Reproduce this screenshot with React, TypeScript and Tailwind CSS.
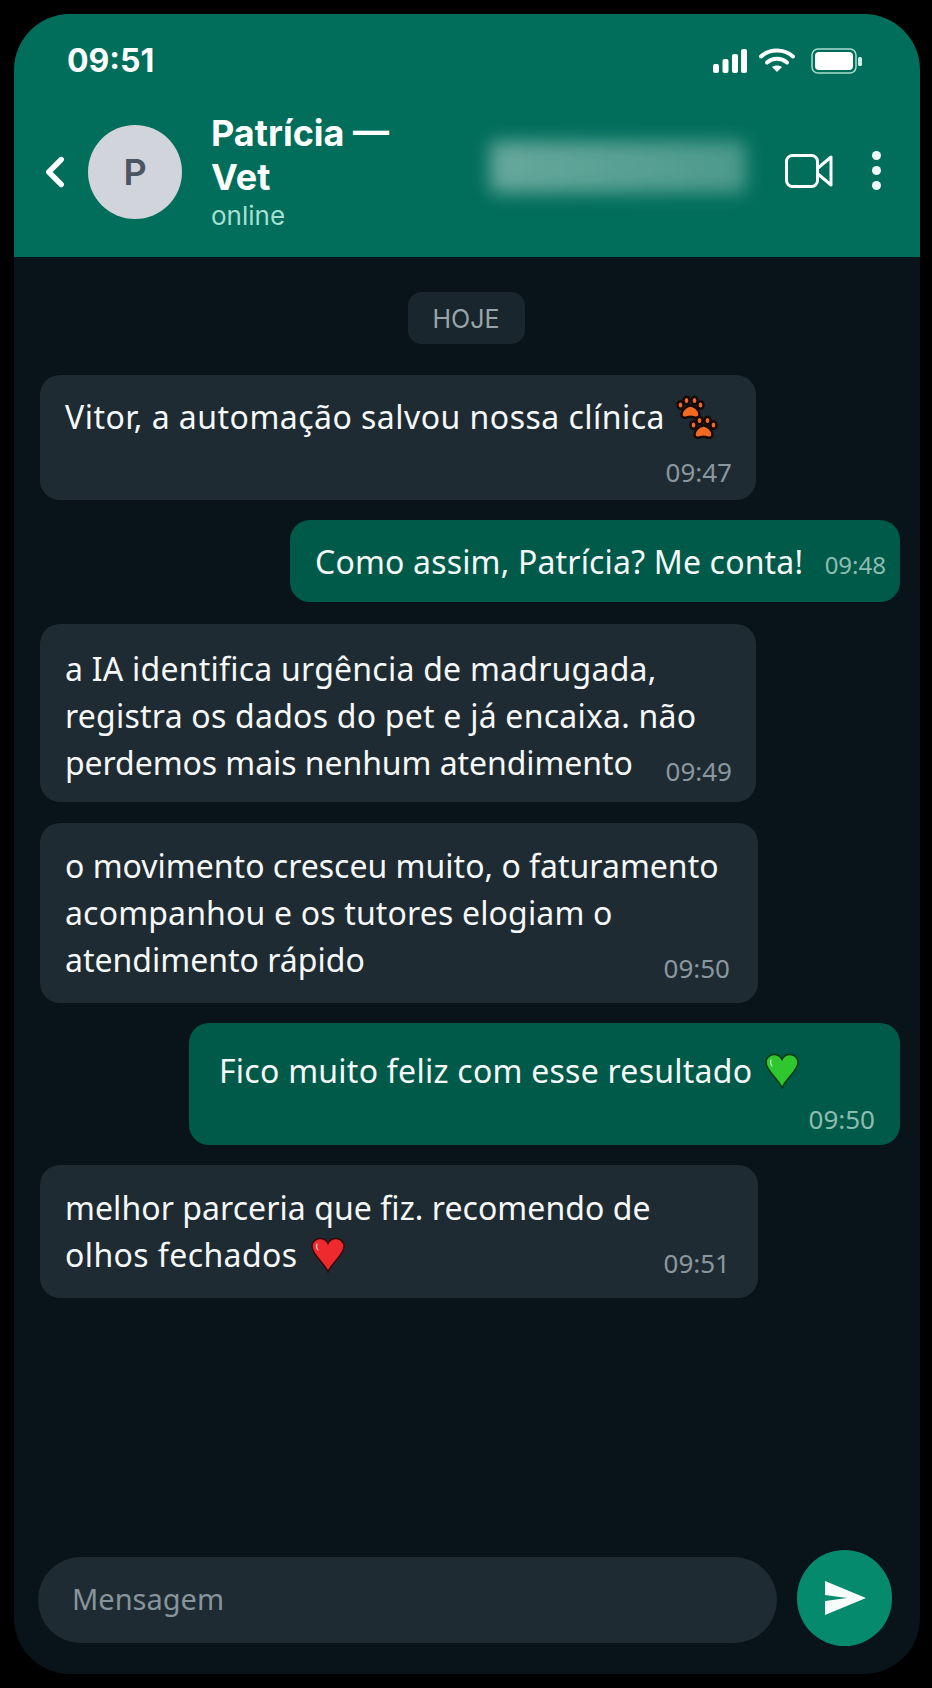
import type { ReactNode } from "react";
import { ChevronLeft } from "lucide-react";

function PawIcon({ x, y }: { x: number; y: number }) {
  return (
    <g transform={`translate(${x} ${y})`} fill="#f26a21" stroke="#170905" strokeWidth="2.400">
      <ellipse cx="3.500" cy="9" rx="3" ry="3.800" />
      <ellipse cx="9.500" cy="4.500" rx="3" ry="3.800" />
      <ellipse cx="17.500" cy="4.500" rx="3" ry="3.800" />
      <ellipse cx="23.500" cy="9" rx="3" ry="3.800" />
      <path d="M13.500 9.500c4 0 9 5 9 9 0 3.500-3.500 3.500-5 3-1.500-.5-2.800-.9-4-.9s-2.500.4-4 .9c-1.500.5-5 .5-5-3 0-4 5-9 9-9z" />
    </g>
  );
}

function Paws() {
  return (
    <svg width="42" height="44" viewBox="0 0 42 44" className="ml-[11px] shrink-0 self-start mt-[2px]">
      <PawIcon x={1} y={1} />
      <PawIcon x={14} y={21} />
    </svg>
  );
}

function Heart({ color, shade }: { color: string; shade: string }) {
  return (
    <svg width="36" height="36" viewBox="0 0 36 36" className="inline-block ml-3 align-[-6px]">
      <path
        d="M18 35C15 26 2 18 2 9.500 2 4.500 6 1.500 10 1.500c3.500 0 6.500 2 8 5 1.500-3 4.500-5 8-5 4 0 8 3 8 8C34 18 21 26 18 35z"
        fill={color}
        stroke={shade}
        strokeWidth="1.500"
      />
      <path d="M7 7c-1 2-.5 4 1 6" fill="none" stroke="#ffffff" strokeOpacity="0.7" strokeWidth="1.200" strokeLinecap="round" />
    </svg>
  );
}

function Time({ children, own }: { children: ReactNode; own?: boolean }) {
  return (
    <span className={`text-[26px] leading-[30px] whitespace-nowrap ${own ? "text-[#8fbcb0]" : "text-[#8b979e]"}`}>
      {children}
    </span>
  );
}

export default function App() {
  return (
    <div className="w-[932px] h-[1688px] bg-black p-[14px] font-['Noto_Sans',sans-serif] text-white">
      <div className="w-[906px] h-[1660px] rounded-[56px] overflow-hidden bg-[#08131a] flex flex-col">
        <header className="h-[243px] bg-[#006e5b] shrink-0 flex flex-col">
          <div className="flex items-center justify-between pl-[53px] pr-[58px] pt-[27px] h-[66px] shrink-0">
            <span className="font-['Inter',sans-serif] font-bold text-[32px] leading-[38px]">09:51</span>
            <div className="flex items-center gap-[13px]">
              <svg width="34" height="24" viewBox="0 0 34 24" fill="#ffffff" className="-translate-x-[2px]">
                <rect x="0" y="15" width="6" height="9" rx="2" />
                <rect x="9.500" y="10" width="6" height="14" rx="2" />
                <rect x="19" y="5" width="6" height="19" rx="2" />
                <rect x="28" y="0" width="6" height="24" rx="2" />
              </svg>
              <svg width="36" height="25" viewBox="0 0 36 25" fill="none" stroke="#ffffff" strokeWidth="4" strokeLinecap="round" className="-translate-x-[3px]">
                <path d="M2 8.500C11 .5 25 .5 34 8.500" />
                <path d="M8 14.500c6-5 14-5 20 0" />
                <path d="M18 24l-5-5c3-2 7-2 10 0z" fill="#ffffff" stroke="none" />
              </svg>
              <svg width="51" height="26" viewBox="0 0 51 26" fill="none">
                <rect x="1" y="1" width="44" height="24" rx="6" stroke="#a9dccf" strokeWidth="1.500" />
                <rect x="4" y="4" width="38" height="18" rx="4" fill="#ffffff" />
                <rect x="47" y="9" width="4" height="9" rx="1.500" fill="#cfeee6" />
              </svg>
            </div>
          </div>

          <div className="flex items-center pl-[16px] pr-[40px] pt-[31px]">
            <ChevronLeft size={50} strokeWidth={2.6} className="text-white shrink-0" />
            <div className="ml-[8px] w-[94px] h-[94px] rounded-full bg-[#d1d5db] flex items-center justify-center shrink-0">
              <span className="font-['Inter',sans-serif] font-semibold text-[36px] text-[#4b5563]">P</span>
            </div>
            <div className="ml-[29px] w-[200px] shrink-0 font-['Inter',sans-serif]">
              <div className="font-bold text-[36px] leading-[44px]">Patrícia — Vet</div>
              <div className="text-[26px] leading-[33px] text-[#a7dfd2]">online</div>
            </div>
            <div className="ml-[79px] w-[256px] h-[52px] rounded-[6px] bg-gradient-to-r from-white/40 to-white/30 blur-[9px] shrink-0 -translate-y-[5px]" />
            <div className="ml-auto flex items-center gap-[38px] -translate-y-[1px]">
              <svg width="48" height="34" viewBox="0 0 48 34" fill="none" stroke="#ffffff" strokeWidth="3" strokeLinejoin="round">
                <rect x="1.500" y="1.500" width="31" height="31" rx="6" />
                <path d="M33 14l13-11v28L33 20" />
              </svg>
              <div className="flex flex-col gap-[6px] translate-x-[1px]">
                <span className="w-[9px] h-[9px] rounded-full bg-[#f0f6f5]" />
                <span className="w-[9px] h-[9px] rounded-full bg-[#f0f6f5]" />
                <span className="w-[9px] h-[9px] rounded-full bg-[#f0f6f5]" />
              </div>
            </div>
          </div>
        </header>

        <main className="flex-1 flex flex-col pt-[35px] pl-[26px] pr-[20px] text-[32px] leading-[47px] text-[#f6f8f8]">
          <div className="self-center -translate-x-[4px] w-[117px] h-[52px] rounded-[14px] bg-[#1a262d] flex items-center justify-center font-['Inter',sans-serif] text-[25px] text-[#98a4aa] pt-[2px]">
            HOJE
          </div>

          <div className="mt-[31px] w-[716px] h-[125px] rounded-[20px] bg-[#1f2b32] pl-[25px] pr-[24px] pt-[18px] flex flex-col">
            <div className="flex items-start h-[47px]">
              <span className="tracking-[0.47px]">Vitor, a automação salvou nossa clínica</span>
              <Paws />
            </div>
            <div className="self-end mt-[6px]"><Time>09:47</Time></div>
          </div>

          <div className="mt-[20px] self-end w-[610px] h-[82px] rounded-[20px] bg-[#005a4a] pl-[25px] pr-[14px] flex items-center justify-between">
            <span className="tracking-[0.17px]">Como assim, Patrícia? Me conta!</span>
            <span className="pt-[8px] text-[#8fbcb0] text-[24px] leading-[30px]">09:48</span>
          </div>

          <div className="mt-[22px] w-[716px] h-[178px] rounded-[20px] bg-[#1f2b32] pl-[25px] pr-[24px] pt-[21px]">
            <div className="tracking-[0.23px]">a IA identifica urgência de madrugada,</div>
            <div className="tracking-[0.23px]">registra os dados do pet e já encaixa. não</div>
            <div className="flex justify-between items-end">
              <span className="tracking-[-0.07px]">perdemos mais nenhum atendimento</span>
              <Time>09:49</Time>
            </div>
          </div>

          <div className="mt-[21px] w-[718px] h-[180px] rounded-[20px] bg-[#1f2b32] pl-[25px] pr-[28px] pt-[19px]">
            <div>o movimento cresceu muito, o faturamento</div>
            <div className="tracking-[0.16px]">acompanhou e os tutores elogiam o</div>
            <div className="flex justify-between items-end">
              <span>atendimento rápido</span>
              <Time>09:50</Time>
            </div>
          </div>

          <div className="mt-[20px] self-end w-[711px] h-[122px] rounded-[20px] bg-[#005a4a] pl-[30px] pr-[25px] pt-[24px] flex flex-col">
            <div className="tracking-[0.25px]">
              Fico muito feliz com esse resultado
              <Heart color="#2fc62f" shade="#0a3a12" />
            </div>
            <div className="self-end -mt-[1px]"><Time own>09:50</Time></div>
          </div>

          <div className="mt-[20px] w-[718px] h-[133px] rounded-[20px] bg-[#1f2b32] pl-[25px] pr-[28px] pt-[19px]">
            <div className="tracking-[0.06px]">melhor parceria que fiz. recomendo de</div>
            <div className="flex justify-between items-end">
              <span className="tracking-[0.4px]">
                olhos fechados
                <Heart color="#ee2a2e" shade="#3a0608" />
              </span>
              <Time>09:51</Time>
            </div>
          </div>

          <div className="mt-auto mb-[28px] -ml-[2px] flex items-center gap-[20px]">
            <div className="w-[739px] h-[86px] rounded-full bg-[#1e2b32] flex items-center pl-[34px] pb-[4px] text-[29px] text-[#87949b] translate-y-[2px]">
              Mensagem
            </div>
            <div className="w-[95px] h-[96px] rounded-full bg-[#058a6e] flex items-center justify-center">
              <svg width="42" height="36" viewBox="0 0 42 36" fill="#f7fbfa">
                <path d="M1 1l41 17L1 35V21l22-3-22-3z" />
              </svg>
            </div>
          </div>
        </main>
      </div>
    </div>
  );
}
